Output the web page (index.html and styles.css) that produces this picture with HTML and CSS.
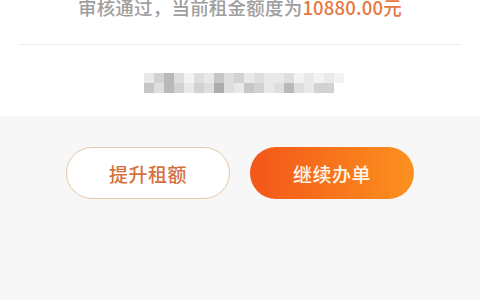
FILE: index.html
```html
<!DOCTYPE html>
<html lang="zh-CN">
<head>
<meta charset="utf-8">
<link rel="stylesheet" href="styles.css">
</head>
<body>
<div class="page">
  <section class="result">
    <p class="notice">审核通过，当前租金额度为<span class="amount">10880.00元</span></p>
    <div class="divider"></div>
    <div class="masked">
      <div class="row">
        <i class="c1"></i><i class="c3"></i><i class="c5"></i><i class="c2"></i><i class="c0"></i><i class="c2"></i><i class="c1"></i><i class="c4"></i><i class="c2"></i><i class="c3"></i><i class="c1"></i><i class="c2"></i><i class="c1"></i><i class="c1"></i><i class="c2"></i><i class="c0"></i><i class="c1"></i><i class="c0"></i><i class="c1"></i><i class="c0"></i>
      </div>
      <div class="row">
        <i class="c4"></i><i class="c2"></i><i class="c5"></i><i class="c3"></i><i class="c1"></i><i class="c3"></i><i class="c2"></i><i class="c6"></i><i class="c2"></i><i class="c1"></i><i class="c4"></i><i class="c3"></i><i class="c1"></i><i class="c2"></i><i class="c5"></i><i class="c2"></i><i class="c1"></i><i class="c3"></i><i class="c3"></i>
      </div>
    </div>
  </section>
  <section class="actions">
    <button class="btn btn-outline">提升租额</button>
    <button class="btn btn-solid">继续办单</button>
  </section>
</div>
</body>
</html>
```
FILE: styles.css
```css
* { box-sizing: border-box; }
html, body { margin: 0; padding: 0; }
body {
  width: 480px;
  height: 300px;
  overflow: hidden;
  background: #f7f7f7;
  font-family: "Noto Sans CJK SC", "Noto Sans", sans-serif;
}
.page { display: flex; flex-direction: column; height: 300px; }
.result {
  background: #ffffff;
  height: 116px;
  display: flex;
  flex-direction: column;
  align-items: center;
}
.notice {
  margin: -5px 0 0;
  font-size: 18.5px;
  line-height: 24px;
  font-weight: 500;
  color: #9e9e9e;
  letter-spacing: 0.2px;
}
.amount { color: #e8763f; }
.divider {
  width: 442px;
  height: 1px;
  background: #efefef;
  margin-top: 25px;
}
.masked {
  margin-top: 28px;
  display: flex;
  flex-direction: column;
  align-self: flex-start;
  margin-left: 144px;
  filter: blur(0.6px);
}
.row { display: flex; }
.row i { display: block; width: 10px; height: 10px; }
.c0 { background: #f3f3f3; }
.c1 { background: #e9e9e9; }
.c2 { background: #dedede; }
.c3 { background: #d2d2d2; }
.c4 { background: #c6c6c6; }
.c5 { background: #b9b9b9; }
.c6 { background: #acacac; }
.actions {
  display: flex;
  justify-content: center;
  gap: 20px;
  padding-top: 31px;
}
.btn {
  width: 164px;
  height: 52px;
  border-radius: 26px;
  font-family: "Noto Sans CJK SC", sans-serif;
  font-size: 19px;
  font-weight: 500;
  letter-spacing: 0.5px;
  cursor: pointer;
}
.btn-outline {
  background: #ffffff;
  border: 1px solid #e6c7a6;
  color: #d6703f;
}
.btn-solid {
  background: linear-gradient(90deg, #f3561a 0%, #f7741c 50%, #fb911f 100%);
  border: none;
  color: #fff6ea;
}
```
